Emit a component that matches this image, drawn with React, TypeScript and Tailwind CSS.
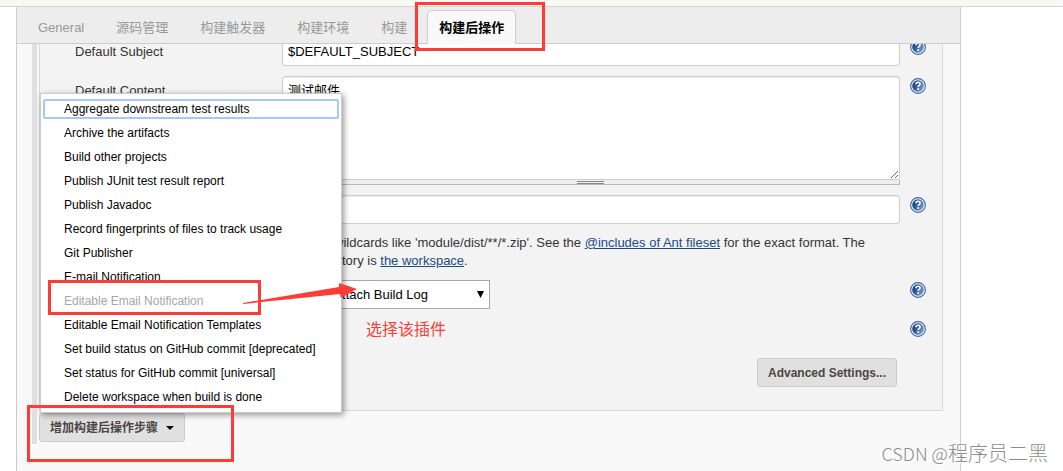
import { useState } from "react"
import clsx from "clsx"

const tabs = ["General", "源码管理", "构建触发器", "构建环境", "构建", "构建后操作"]

const postBuildSteps = [
  { name: "Aggregate downstream test results" },
  { name: "Archive the artifacts" },
  { name: "Build other projects" },
  { name: "Publish JUnit test result report" },
  { name: "Publish Javadoc" },
  { name: "Record fingerprints of files to track usage" },
  { name: "Git Publisher" },
  { name: "E-mail Notification" },
  { name: "Editable Email Notification", disabled: true },
  { name: "Editable Email Notification Templates" },
  { name: "Set build status on GitHub commit [deprecated]" },
  { name: "Set status for GitHub commit [universal]" },
  { name: "Delete workspace when build is done" },
]

const fieldClass =
  "block w-full rounded-[3px] border border-[#ccc] bg-white px-[5px] text-[13px] text-black shadow-[inset_0_1px_1px_rgba(0,0,0,0.08)] outline-none"

function HelpButton({ topic }: { topic: string }) {
  return (
    <button type="button" aria-label={`Help for ${topic}`} className="mt-0.5 ml-2.5 h-4 w-4 shrink-0 cursor-pointer">
      <svg viewBox="0 0 16 16" className="block h-4 w-4">
        <defs>
          <linearGradient id="help-fill" x1="0" y1="0.3" x2="1" y2="0.8">
            <stop offset="0.2" stopColor="#1f4a8c" />
            <stop offset="1" stopColor="#7fa3d2" />
          </linearGradient>
        </defs>
        <circle cx="8" cy="8" r="7.4" fill="#f4f8fd" stroke="#3a64a3" strokeWidth="1.1" />
        <circle cx="8" cy="8" r="5.8" fill="url(#help-fill)" />
        <path
          d="M6 6.2C6 4.8 6.9 4.2 8 4.2s2.1.7 2.1 1.8c0 1.5-1.9 1.5-1.9 3.1"
          fill="none"
          stroke="#fff"
          strokeWidth="1.6"
        />
        <rect x="7.3" y="10.2" width="1.8" height="1.7" fill="#fff" />
      </svg>
    </button>
  )
}

function Row({ id, label, children }: { id: string; label: string; children?: React.ReactNode }) {
  return (
    <div className="flex min-h-[29px] items-start">
      <label htmlFor={id} className="w-[207px] shrink-0 leading-[29px]">
        {label}
      </label>
      <div className="min-w-0 flex-1">{children}</div>
      <HelpButton topic={label} />
    </div>
  )
}

function StepMenu() {
  return (
    <ul className="absolute bottom-full left-px z-10 w-[302px] border border-[#ccc] bg-white py-[3px] text-xs text-black shadow-[2px_2px_6px_rgba(0,0,0,0.4)]">
      {postBuildSteps.map((step, index) => (
        <li key={step.name} className="px-0.5 py-0.5">
          <button
            type="button"
            disabled={step.disabled}
            className={clsx(
              "block h-5 w-full rounded-[2px] border-2 px-[19px] text-left leading-4 whitespace-nowrap",
              index === 0 ? "border-[#a5c7fe]" : "border-transparent",
              step.disabled && "text-[#a6a6a6]"
            )}
          >
            {step.name}
          </button>
        </li>
      ))}
    </ul>
  )
}

export default function App() {
  const [activeTab, setActiveTab] = useState("构建后操作")
  const [menuOpen, setMenuOpen] = useState(true)

  return (
    <div className="relative flex min-h-screen flex-col overflow-hidden bg-white font-['Liberation_Sans','Noto_Sans_CJK_SC',sans-serif] text-[13px] text-[#333]">
      <div className="h-[7px] border-b border-[#d3d7cf] bg-[#f6faf2]" />

      <main className="mr-[102px] ml-4 flex flex-1 flex-col border-x border-[#ccc] bg-[#f9f9f9]">
        <nav className="z-10 flex h-[37px] gap-2 border-b border-[#ccc] bg-[#ededed] pt-[3px] pl-[9px]">
          {tabs.map((tab) => (
            <button
              key={tab}
              type="button"
              onClick={() => setActiveTab(tab)}
              className={clsx(
                "-mb-px rounded-t-[5px] border border-b-0 px-[11px] whitespace-nowrap",
                tab === activeTab
                  ? "border-[#ccc] bg-[#f9f9f9] font-bold text-black"
                  : "border-transparent text-[#999]"
              )}
            >
              {tab}
            </button>
          ))}
        </nav>

        <div className="flex pr-[17px] pl-[15px]">
          <div className="mr-0.5 w-[5px] shrink-0 bg-[#e0e0e0]" />

          <div className="min-w-0 flex-1 pb-0.5">
            <form
              className="border border-t-0 border-[#d9d9d9] bg-[#f3f3f3] pr-4 pb-[23px] pl-[35px]"
              onSubmit={(e) => e.preventDefault()}
            >
              {/* the list is scrolled, so the first row sits partly under the tab bar */}
              <div className="-mt-[7px] flex flex-col gap-2.5">
                <Row id="subject" label="Default Subject">
                  <input id="subject" type="text" defaultValue="$DEFAULT_SUBJECT" className={clsx(fieldClass, "h-[29px]")} />
                </Row>

                <Row id="content" label="Default Content">
                  <textarea
                    id="content"
                    defaultValue="测试邮件"
                    className={clsx(fieldClass, "h-[104px] resize-y py-1 leading-5")}
                  />
                  <div className="flex h-[5px] justify-center border-r border-b border-[#bbb8b4] bg-[#eee]">
                    <div className="mt-px h-[3px] w-[27px] border-y border-[#888]" />
                  </div>
                </Row>

                <Row id="attachments" label="Attachments">
                  <input id="attachments" type="text" className={clsx(fieldClass, "h-[29px]")} />
                </Row>

                <p className="mr-12 ml-[207px] leading-[18px]">
                  Can use wildcards like 'module/dist/**/*.zip'. See the{" "}
                  <a href="#fileset" className="text-[#204a87] underline">
                    @includes of Ant fileset
                  </a>{" "}
                  for the exact format. The base directory is{" "}
                  <a href="#workspace" className="text-[#204a87] underline">
                    the workspace
                  </a>
                  .
                </p>

                <Row id="build-log" label="Attach Build Log">
                  <div className="relative w-52">
                    <select
                      id="build-log"
                      className="block h-[29px] w-full appearance-none border border-[#a9a9a9] bg-white px-[7px] text-[13px] text-black"
                    >
                      <option>Do Not Attach Build Log</option>
                      <option>Attach Build Log</option>
                      <option>Compress and Attach Build Log</option>
                    </select>
                    <svg viewBox="0 0 7 7" className="pointer-events-none absolute top-[11px] right-1.5 h-[7px] w-[7px]">
                      <path d="M0 0h7L3.5 7z" fill="#000" />
                    </svg>
                  </div>
                </Row>

                <Row id="tokens" label="Content Token Reference" />

                <div className="mr-[29px] flex justify-end">
                  <button
                    type="button"
                    className="h-[29px] rounded-[3px] border border-[#ccc] bg-[#e0e0e0] px-2.5 text-xs font-bold text-[#4d4545]"
                  >
                    Advanced Settings...
                  </button>
                </div>
              </div>
            </form>

            <div className="relative mt-0.5 w-fit">
              {menuOpen && <StepMenu />}
              <button
                type="button"
                onClick={() => setMenuOpen(!menuOpen)}
                className="flex h-[29px] items-center gap-2 rounded-[3px] border border-[#ccc] bg-[#e0e0e0] px-2.5 text-xs font-bold text-[#4d4545]"
              >
                增加构建后操作步骤
                <svg viewBox="0 0 8 4" className="h-1 w-2">
                  <path d="M0 0h8L4 4z" fill="#000" />
                </svg>
              </button>
            </div>
          </div>
        </div>
      </main>

      {/* tutorial marks drawn over the page */}
      <div className="pointer-events-none absolute inset-0 z-20">
        <div className="absolute top-0.5 left-[415px] h-[49px] w-[130px] border-3 border-[#fe3b37]" />
        <div className="absolute top-[280px] left-12 h-[35px] w-[213px] border-3 border-[#fe3b37]" />
        <div className="absolute top-[405px] left-[27px] h-[57px] w-[207px] border-3 border-[#fe3b37]" />
        <svg viewBox="0 0 116 24" className="absolute top-[282px] left-[243px] h-6 w-[116px]">
          <path d="M0 21L96 5L96 1L114 7L98 16L97 12L0 22z" fill="#fe3b37" />
        </svg>
        <p className="absolute top-[318px] left-[366px] text-base leading-6 text-[#fe3b37]">选择该插件</p>
        <p className="absolute right-[15px] bottom-1.5 font-['Noto_Sans_CJK_SC',sans-serif] text-xl leading-6 font-light text-[#8c8c8c] [text-shadow:1px_1px_0_#fff]">
          <span className="text-lg leading-6">CSDN @</span>程序员二黑
        </p>
      </div>
    </div>
  )
}
